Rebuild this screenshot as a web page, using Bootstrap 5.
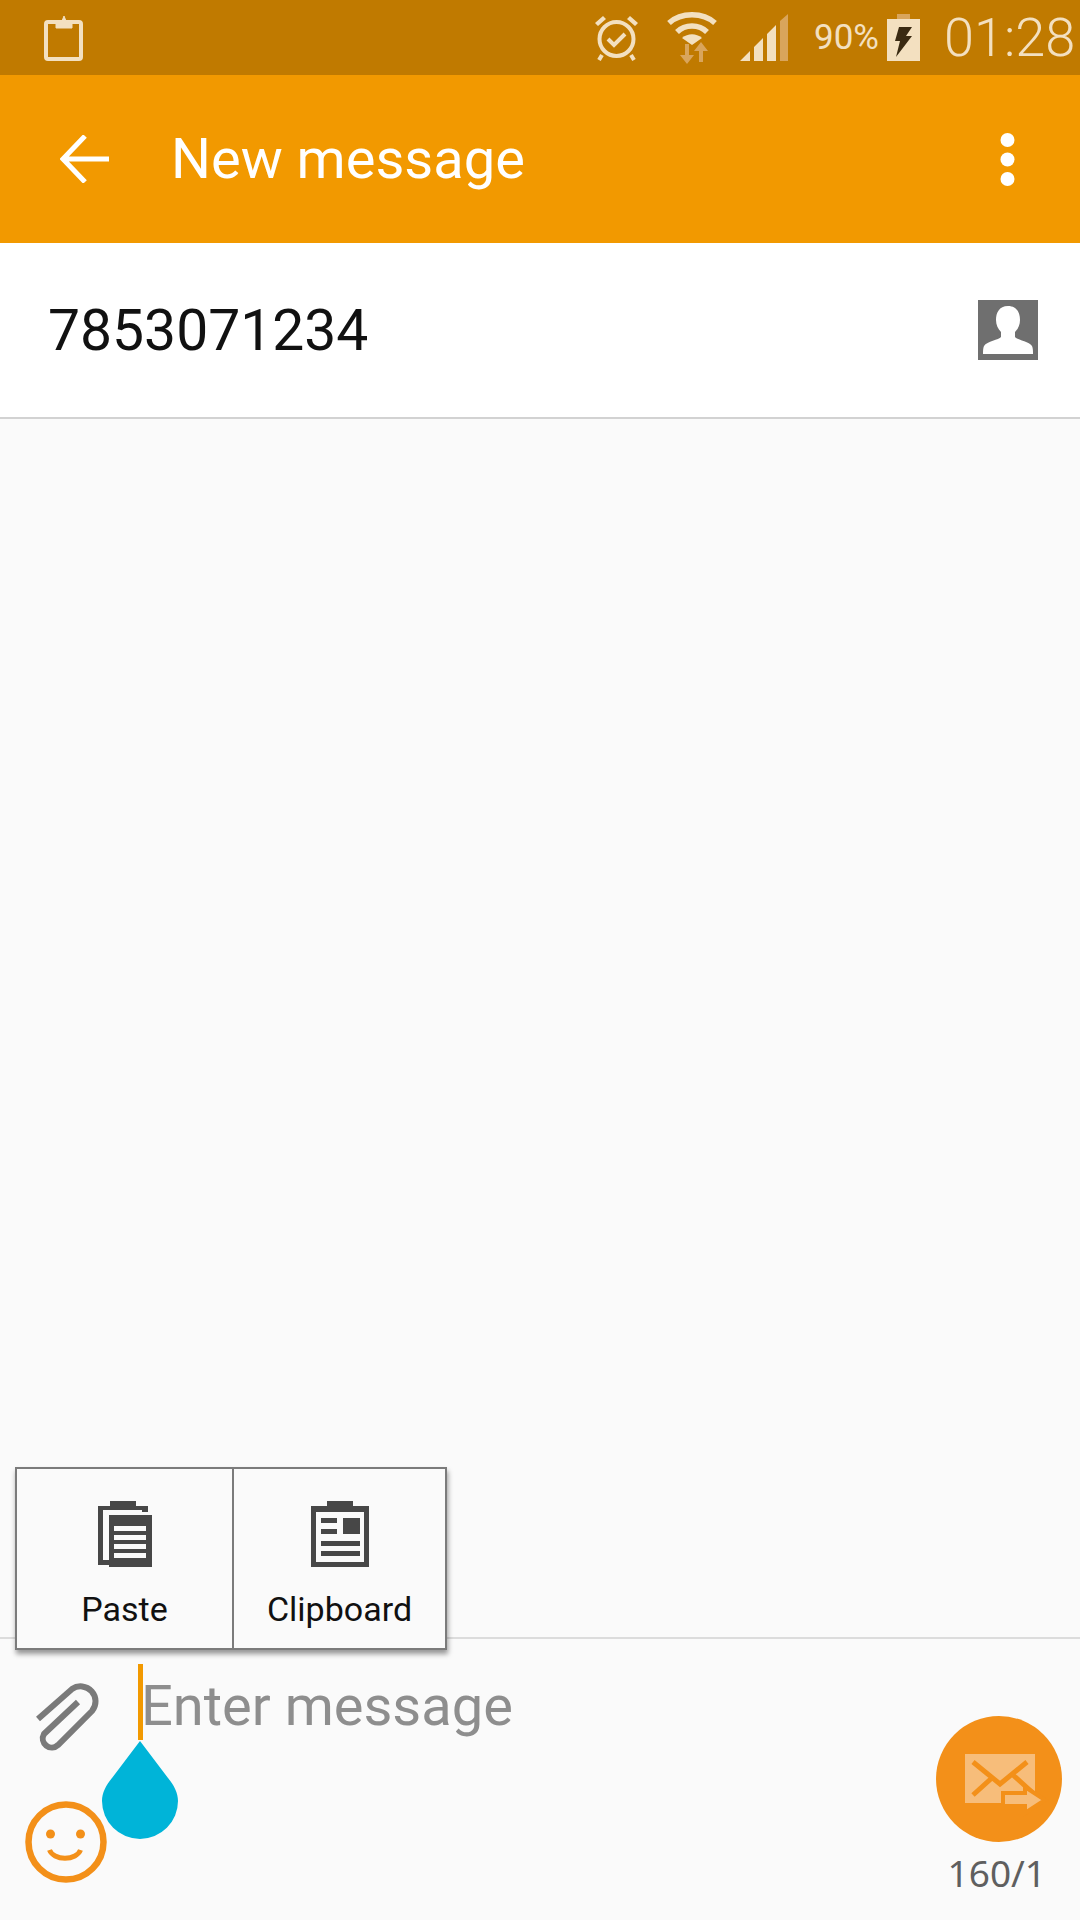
<!DOCTYPE html>
<html lang="en">
<head>
    <meta charset="UTF-8" />
    <meta name="viewport" content="width=device-width, initial-scale=1.0"/>
    <title>New message</title>
    <link href="https://cdn.jsdelivr.net/npm/bootstrap@5.3.2/dist/css/bootstrap.min.css" rel="stylesheet">
    <style>
        body {
          background-color: #fafafa;
          font-family: Roboto, "Liberation Sans", sans-serif;
        }
        svg { display: block; flex-shrink: 0; }
        .phone { width: 1080px; height: 1920px; overflow: hidden; }

        .status-strip { height: 75px; background: #c07a00; color: #f3e0c0; }
        .clip-slot { margin: 0 0 0 44px; }
        .status-alarm { margin-right: 28px; }
        .status-wifi { margin-right: 23px; }
        .status-signal { margin-right: 26px; }
        .status-pct { font-size: 35px; line-height: 1; width: 73px; }
        .status-batt { margin-right: 24px; }
        .status-time { font-size: 54px; font-weight: 300; line-height: 1; width: 136px; }

        .app-strip { height: 168px; background: #f29900; color: #fff; }
        .back-slot { margin: 0 62px 0 60px; }
        .app-title { font-size: 56px; line-height: 1; }
        .more-slot { margin-right: 65px; }

        .recipient-row { height: 176px; background: #fff; border-bottom: 2px solid #d2d2d2; }
        .recipient-num { font-size: 57px; line-height: 1; margin-left: 48px; color: #111; }
        .person-slot { margin-right: 42px; }

        .composer { height: 283px; border-top: 2px solid #dcdcdc; }
        .tool-col { width: 141px; }
        .paperclip-slot { margin: 41px 0 0 34px; }
        .smile-slot { margin: 49px 0 0 25px; }
        .enter-text { font-size: 56px; line-height: 1; color: #8e8e8e; margin-top: 39px; }
        .send-col { margin-right: 18px; padding-top: 77px; }
        .send-count { font-size: 37px; line-height: 1; color: #5f5f5f; font-family: "Noto Sans", sans-serif; margin: 12px 16px 0 0; }

        .paste-popup {
          position: absolute; left: 15px; top: -172px; width: 432px; height: 183px;
          background: #fafafa; border: 2px solid #7b7b7b;
          box-shadow: 1px 4px 5px rgba(0,0,0,.4);
        }
        .popup-cell { color: #111; font-size: 34px; line-height: 1; }
        .popup-cell + .popup-cell { border-left: 2px solid #7b7b7b; }
        .popup-icon { margin: 32px 0 25px; }
        .text-caret { position: absolute; left: 138px; top: 25px; width: 5px; height: 76px; background: #f29900; }
        .text-handle { position: absolute; left: 102px; top: 102px; }
    </style>
</head>
<body>
<div class="phone d-flex flex-column">

    <!-- Status bar -->
    <div class="status-strip d-flex align-items-center">
        <svg class="clip-slot" width="39" height="46" viewBox="0 0 39 46">
            <rect x="2" y="7" width="35" height="37" rx="2" fill="none" stroke="#f3e0c0" stroke-width="4"/>
            <path d="M12 6h6l2-5 2 5h6v7H12z" fill="#f3e0c0" stroke="#f3e0c0" stroke-width="1"/>
        </svg>
        <div class="flex-grow-1"></div>
        <svg class="status-alarm" width="45" height="47" viewBox="0 0 45 47">
            <circle cx="22.5" cy="25" r="17" fill="none" stroke="#f3e0c0" stroke-width="4"/>
            <path d="M1 9 9 2l3 3-8 7zM44 9 36 2l-3 3 8 7z" fill="#f3e0c0"/>
            <path d="M8 41 5 46M37 41l3 5" stroke="#f3e0c0" stroke-width="4"/>
            <path d="M14 25l6 6 11-11" fill="none" stroke="#f3e0c0" stroke-width="4"/>
        </svg>
        <svg class="status-wifi" width="50" height="53" viewBox="0 0 50 53">
            <path d="M2 12C14 1 36 1 48 12" fill="none" stroke="#f3e0c0" stroke-width="5.5"/>
            <path d="M10 21C18 13 32 13 40 21" fill="none" stroke="#f3e0c0" stroke-width="5.5"/>
            <path d="M25 34 15 27c6-5 14-5 20 0z" fill="#f3e0c0"/>
            <path d="M18 33v11h-5l7 9 7-9h-5V33zM34 31l-7 9h5v11h4V40h5z" fill="#d9a55c"/>
        </svg>
        <svg class="status-signal" width="48" height="48" viewBox="0 0 48 48">
            <path d="M0 47 10 37V47zM14 33l9-9V47H14zM27 20l9-9V47H27z" fill="#f3e0c0"/>
            <path d="M40 7l8-7V47H40z" fill="#d9a55c"/>
        </svg>
        <div class="status-pct">90%</div>
        <svg class="status-batt" width="33" height="47" viewBox="0 0 33 47">
            <rect x="10" y="0" width="13" height="6" fill="#d9a55c"/>
            <rect x="0" y="5" width="33" height="42" fill="#f3e0c0"/>
            <path d="M12 13h13l-6 9h6L9 43l4-16H8z" fill="#3a2a12"/>
        </svg>
        <div class="status-time">01:28</div>
    </div>

    <!-- Action bar -->
    <div class="app-strip d-flex align-items-center">
        <svg class="back-slot" width="49" height="48" viewBox="0 0 49 48">
            <path d="M25 1 3 24l22 23M3 24h46" fill="none" stroke="#fff" stroke-width="5"/>
        </svg>
        <div class="app-title flex-grow-1">New message</div>
        <svg class="more-slot" width="15" height="53" viewBox="0 0 15 53">
            <circle cx="7.5" cy="7" r="7" fill="#fff"/>
            <circle cx="7.5" cy="26.500" r="7" fill="#fff"/>
            <circle cx="7.5" cy="46" r="7" fill="#fff"/>
        </svg>
    </div>

    <!-- Recipient -->
    <div class="recipient-row d-flex align-items-center justify-content-between">
        <div class="recipient-num">7853071234</div>
        <svg class="person-slot" width="60" height="60" viewBox="0 0 60 60">
            <rect width="60" height="60" fill="#6f6f6f"/>
            <path d="M30 6c-9 0-12 7-12 14 0 5 2 9 5 12v5c-2 3-14 4-17 9-1 2-1 5-1 8h50c0-3 0-6-1-8-3-5-15-6-17-9v-5c3-3 5-7 5-12 0-7-3-14-12-14z" fill="#fff"/>
        </svg>
    </div>

    <div class="flex-grow-1"></div>

    <!-- Composer -->
    <div class="composer d-flex position-relative">
        <div class="paste-popup d-flex">
            <div class="popup-cell d-flex flex-column align-items-center" style="width: 215px">
                <svg class="popup-icon" width="54" height="66" viewBox="0 0 54 66">
                    <path d="M12 0h26v5h12v6H44V9H5v50h6v5H0V5h12z" fill="#474747"/>
                    <rect x="11" y="14" width="43" height="52" fill="#474747"/>
                    <path d="M16 25h32v5H16zM16 34h32v5H16zM16 43h32v5H16zM16 52h32v5H16z" fill="#fafafa"/>
                </svg>
                <span>Paste</span>
            </div>
            <div class="popup-cell d-flex flex-column align-items-center flex-grow-1">
                <svg class="popup-icon" width="58" height="66" viewBox="0 0 58 66">
                    <path fill-rule="evenodd" d="M16 0h26v5h16v61H0V5h16zM5 11v50h48V11z" fill="#474747"/>
                    <path d="M10 17h16v5H10zM10 28h16v5H10zM32 17h17v16H32zM10 40h39v5H10zM10 50h39v5H10z" fill="#474747"/>
                </svg>
                <span>Clipboard</span>
            </div>
        </div>

        <div class="tool-col">
            <svg class="paperclip-slot" width="66" height="72" viewBox="0 0 66 72">
                <path d="M4 39 38 9A15 15 0 0 1 58 31L24 65A9 9 0 0 1 10 54L44 22" fill="none" stroke="#7a7a7a" stroke-width="6"/>
            </svg>
            <svg class="smile-slot" width="82" height="82" viewBox="0 0 82 82">
                <circle cx="41" cy="41" r="37.500" fill="none" stroke="#f39019" stroke-width="6.500"/>
                <circle cx="25.500" cy="33" r="4.500" fill="#f39019"/>
                <circle cx="55.500" cy="33" r="4.500" fill="#f39019"/>
                <path d="M24.500 49A16 11 0 0 0 55.500 49" fill="none" stroke="#f39019" stroke-width="5"/>
            </svg>
        </div>
        <div class="flex-grow-1">
            <div class="enter-text">Enter message</div>
        </div>
        <div class="send-col d-flex flex-column align-items-end">
            <svg width="126" height="126" viewBox="0 0 126 126">
                <circle cx="63" cy="63" r="63" fill="#f39019"/>
                <rect x="29" y="38" width="70" height="49" fill="#f7bd7a"/>
                <path d="M37 46 64 68 91 46M37 79 57 61M77 59 97 77" fill="none" stroke="#f39019" stroke-width="5"/>
                <path d="M67 77H89V71L109 84 89 97V90H67z" fill="#f7bd7a" stroke="#f39019" stroke-width="4"/>
            </svg>
            <div class="send-count">160/1</div>
        </div>

        <div class="text-caret"></div>
        <svg class="text-handle" width="76" height="98" viewBox="0 0 76 98">
            <path d="M38 0 66 37C72 44 76 52 76 60A38 38 0 0 1 0 60C0 52 4 44 10 37Z" fill="#00b4d8"/>
        </svg>
    </div>
</div>
<script src="https://cdn.jsdelivr.net/npm/bootstrap@5.3.2/dist/js/bootstrap.bundle.min.js"></script>
</body>
</html>
